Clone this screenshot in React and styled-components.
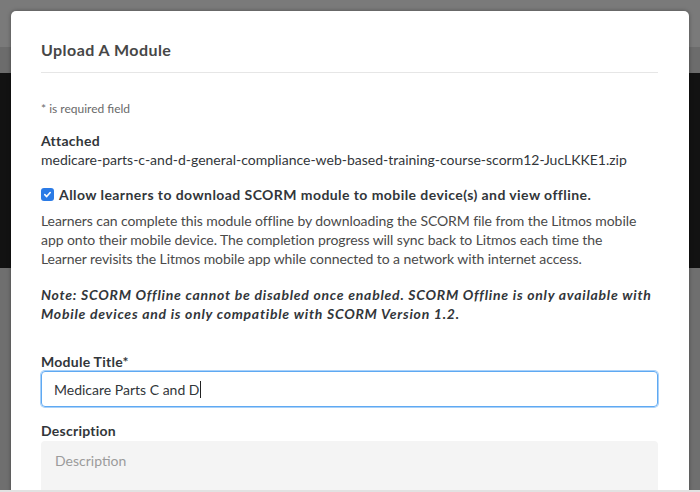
import React from "react";
import styled, { createGlobalStyle } from "styled-components";

const GlobalStyle = createGlobalStyle`
  html, body {
    margin: 0;
    padding: 0;
    height: 492px;
    overflow: hidden;
  }
  body {
    font-family: Lato, "Noto Sans", "Liberation Sans", sans-serif;
    background: linear-gradient(
      to bottom,
      #7a7a7a 0px,
      #7a7a7a 47px,
      #6c6c6c 47px,
      #6c6c6c 73px,
      #121212 73px,
      #121212 268px,
      #6f6f6f 268px,
      #6f6f6f 490px,
      #e2e2e2 490px
    );
  }
  * { box-sizing: border-box; }
`;

const Backdrop = styled.div`
  padding: 11px 11px 0 11px;
  height: 490px;
  overflow: hidden;
`;

const Dialog = styled.div`
  background: #ffffff;
  border-radius: 5px 5px 0 0;
  box-shadow: 0 0 4px rgba(0, 0, 0, 0.35);
  padding: 0 31px 0 30px;
  min-height: 500px;
`;

const Header = styled.div`
  padding: 29px 0 12px;
  border-bottom: 1px solid #e6e6e6;
`;

const Title = styled.h2`
  margin: 0;
  font-size: 16px;
  line-height: 20px;
  font-weight: 700;
  letter-spacing: 0.45px;
  color: #474747;
`;

const Body = styled.div`
  padding-top: 28px;
`;

const Hint = styled.div`
  font-size: 12px;
  line-height: 16px;
  color: #6a6a6a;
`;

const Label = styled.div`
  font-size: 14px;
  line-height: 18px;
  font-weight: 700;
  letter-spacing: 0.25px;
  color: #32363a;
  margin-top: ${(p) => p.$top || 0}px;
`;

const Text = styled.div`
  margin-top: 1px;
  font-size: 14px;
  line-height: 18px;
  color: #32363a;
`;

const CheckRow = styled.label`
  display: flex;
  align-items: center;
  gap: 5px;
  margin-top: 16px;
  font-size: 14px;
  line-height: 19px;
  font-weight: 700;
  letter-spacing: 0.43px;
  color: #32363a;
`;

const Box = styled.span`
  width: 13px;
  height: 13px;
  border-radius: 3px;
  background: #2b7be6;
  display: inline-flex;
  align-items: center;
  justify-content: center;
  flex: none;
`;

const Para = styled.p`
  margin: ${(p) => p.$top || 0}px 0 0;
  font-size: 14px;
  line-height: 19px;
  color: #4a4a4a;
  letter-spacing: -0.08px;
  white-space: nowrap;
`;

const Note = styled(Para)`
  font-style: italic;
  font-weight: 700;
  color: #32363a;
  letter-spacing: 0.75px;
`;

const Field = styled.div`
  height: 36px;
  border: 1px solid #5fa9f2;
  box-shadow: 0 0 0 1px #a9d1f9;
  border-radius: 4px;
  display: flex;
  align-items: center;
  padding-left: 12px;
  font-size: 14px;
  color: #32363a;
`;

const Caret = styled.span`
  display: inline-block;
  width: 1px;
  height: 17px;
  background: #222;
  margin-left: 1px;
`;

const Area = styled.div`
  margin-top: 1px;
  background: #f4f4f4;
  border-radius: 4px;
  height: 80px;
  padding: 10px 14px;
  font-size: 14px;
  line-height: 19px;
  color: #9b9b9b;
`;

export default function App() {
  return (
    <>
      <GlobalStyle />
      <Backdrop>
        <Dialog>
          <Header>
            <Title>Upload A Module</Title>
          </Header>
          <Body>
            <Hint>* is required field</Hint>
            <Label $top={15}>Attached</Label>
            <Text>medicare-parts-c-and-d-general-compliance-web-based-training-course-scorm12-JucLKKE1.zip</Text>
            <CheckRow>
              <Box>
                <svg width="9" height="9" viewBox="0 0 10 10">
                  <path d="M2 5.2 L4.1 7.3 L8 2.8" fill="none" stroke="#fff" strokeWidth="1.8" strokeLinecap="round" strokeLinejoin="round" />
                </svg>
              </Box>
              Allow learners to download SCORM module to mobile device(s) and view offline.
            </CheckRow>
            <Para $top={7}>
              Learners can complete this module offline by downloading the SCORM file from the Litmos mobile
              <br />
              app onto their mobile device. The completion progress will sync back to Litmos each time the
              <br />
              Learner revisits the Litmos mobile app while connected to a network with internet access.
            </Para>
            <Note $top={17}>
              Note: SCORM Offline cannot be disabled once enabled. SCORM Offline is only available with
              <br />
              Mobile devices and is only compatible with SCORM Version 1.2.
            </Note>
            <Label $top={30}>Module Title*</Label>
            <Field>
              Medicare Parts C and D<Caret />
            </Field>
            <Label $top={15}>Description</Label>
            <Area>Description</Area>
          </Body>
        </Dialog>
      </Backdrop>
    </>
  );
}
